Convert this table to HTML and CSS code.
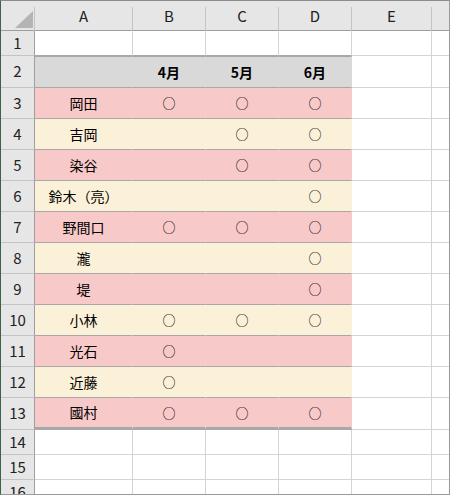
FILE: index.html
```html
<!DOCTYPE html>
<html lang="ja">
<head>
<meta charset="utf-8">
<title>Sheet</title>
<link rel="stylesheet" href="styles.css">
</head>
<body>
<div class="sheet">
  <div class="ch corner"><div class="tri"></div></div>
  <div class="ch">A</div>
  <div class="ch">B</div>
  <div class="ch">C</div>
  <div class="ch">D</div>
  <div class="ch">E</div>
  <div class="ch last-col"></div>

  <div class="rh">1</div>
  <div class="x r1"></div><div class="x r1"></div><div class="x r1"></div><div class="x r1"></div><div class="x"></div><div class="x f"></div>

  <div class="rh">2</div>
  <div class="x g"></div><div class="x g">4月</div><div class="x g">5月</div><div class="x g">6月</div><div class="x"></div><div class="x f"></div>

  <div class="rh">3</div>
  <div class="x p">岡田</div><div class="x p o">○</div><div class="x p o">○</div><div class="x p o">○</div><div class="x"></div><div class="x f"></div>

  <div class="rh">4</div>
  <div class="x y">吉岡</div><div class="x y"></div><div class="x y o">○</div><div class="x y o">○</div><div class="x"></div><div class="x f"></div>

  <div class="rh">5</div>
  <div class="x p">染谷</div><div class="x p"></div><div class="x p o">○</div><div class="x p o">○</div><div class="x"></div><div class="x f"></div>

  <div class="rh">6</div>
  <div class="x y">鈴木（亮）</div><div class="x y"></div><div class="x y"></div><div class="x y o">○</div><div class="x"></div><div class="x f"></div>

  <div class="rh">7</div>
  <div class="x p">野間口</div><div class="x p o">○</div><div class="x p o">○</div><div class="x p o">○</div><div class="x"></div><div class="x f"></div>

  <div class="rh">8</div>
  <div class="x y">瀧</div><div class="x y"></div><div class="x y"></div><div class="x y o">○</div><div class="x"></div><div class="x f"></div>

  <div class="rh">9</div>
  <div class="x p">堤</div><div class="x p"></div><div class="x p"></div><div class="x p o">○</div><div class="x"></div><div class="x f"></div>

  <div class="rh">10</div>
  <div class="x y">小林</div><div class="x y o">○</div><div class="x y o">○</div><div class="x y o">○</div><div class="x"></div><div class="x f"></div>

  <div class="rh">11</div>
  <div class="x p">光石</div><div class="x p o">○</div><div class="x p"></div><div class="x p"></div><div class="x"></div><div class="x f"></div>

  <div class="rh">12</div>
  <div class="x y">近藤</div><div class="x y o">○</div><div class="x y"></div><div class="x y"></div><div class="x"></div><div class="x f"></div>

  <div class="rh">13</div>
  <div class="x p last">國村</div><div class="x p last o">○</div><div class="x p last o">○</div><div class="x p last o">○</div><div class="x"></div><div class="x f"></div>

  <div class="rh">14</div>
  <div class="x"></div><div class="x"></div><div class="x"></div><div class="x"></div><div class="x"></div><div class="x f"></div>

  <div class="rh">15</div>
  <div class="x"></div><div class="x"></div><div class="x"></div><div class="x"></div><div class="x"></div><div class="x f"></div>

  <div class="rh">16</div>
  <div class="x"></div><div class="x"></div><div class="x"></div><div class="x"></div><div class="x"></div><div class="x f"></div>
</div>
</body>
</html>
```

FILE: styles.css
```css
html, body {
  margin: 0;
  padding: 0;
  background: #fff;
}

.sheet {
  width: 450px;
  height: 495px;
  box-sizing: border-box;
  border: 1px solid #9a9a9a;
  border-left-color: #41614f;
  border-top-color: #8c8c8c;
  display: grid;
  grid-template-columns: 34px 98px 73px 73px 73px 80px 17px;
  grid-template-rows: 30px 25px 32px repeat(10, 31px) 32px 25px 25px 25px;
  overflow: hidden;
  font-family: "Noto Sans CJK JP", "Noto Sans", sans-serif;
  font-size: 14px;
  color: #000;
  background: #fff;
}

.ch {
  position: relative;
  box-sizing: border-box;
  display: flex;
  align-items: center;
  justify-content: center;
  background: #e6e6e6;
  border-right: 1px solid transparent;
  border-bottom: 1px solid #9e9e9e;
  font-size: 15px;
  color: #222;
  line-height: 1;
  padding-bottom: 1px;
}

.ch::after {
  content: "";
  position: absolute;
  right: -1px;
  top: 6px;
  bottom: 0;
  width: 1px;
  background: #c4c4c4;
}

.ch.last-col {
  border-right: none;
}

.ch.last-col::after {
  display: none;
}

.corner {
  align-items: flex-end;
  justify-content: flex-end;
  padding-bottom: 0;
}

.tri {
  width: 18px;
  height: 17px;
  margin: 0 1px 2px 0;
  background: #b4b4b4;
  clip-path: polygon(100% 0, 100% 100%, 0 100%);
}

.rh {
  box-sizing: border-box;
  display: flex;
  align-items: center;
  justify-content: center;
  background: #e6e6e6;
  border-right: 1px solid #9e9e9e;
  border-bottom: 1px solid #c4c4c4;
  font-size: 15px;
  color: #222;
  line-height: 1;
  padding-bottom: 2px;
  overflow: hidden;
}

.x {
  box-sizing: border-box;
  display: flex;
  align-items: center;
  justify-content: center;
  border-right: 1px solid #d4d4d4;
  border-bottom: 1px solid #d4d4d4;
  overflow: hidden;
  line-height: 1;
  white-space: nowrap;
  padding-bottom: 1px;
}

.x.o {
  font-size: 13px;
}

.x.f {
  border-right: none;
}

.x.r1 {
  border-bottom-color: #a8a8a8;
}

.x.g {
  background: #d9d9d9;
  border-top: 1px solid #a8a8a8;
  border-right-color: transparent;
  border-bottom-color: #a8a8a8;
  font-weight: bold;
}

.x.p {
  background: #f8c9c9;
  border-right-color: transparent;
  border-bottom-color: #a8a8a8;
}

.x.y {
  background: #fbf0d8;
  border-right-color: transparent;
  border-bottom-color: #a8a8a8;
}

.x.last {
  border-bottom: 3px solid #a8a8a8;
}
```
